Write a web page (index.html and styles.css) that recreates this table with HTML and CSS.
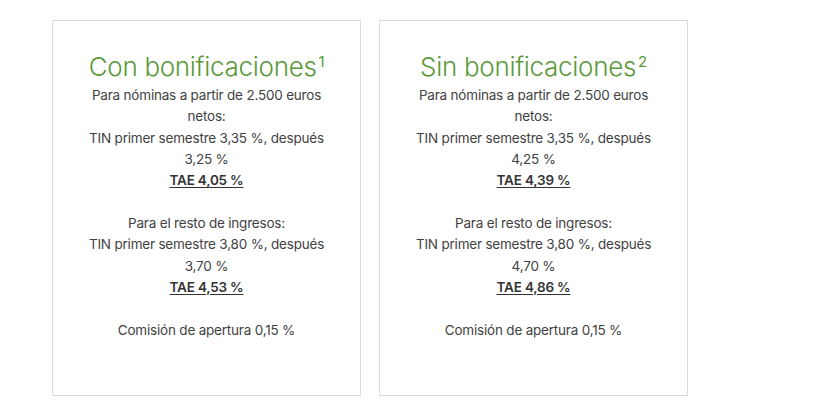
FILE: index.html
```html
<!DOCTYPE html>
<html lang="es">
<head>
<meta charset="utf-8">
<link rel="stylesheet" href="styles.css">
</head>
<body>
<div class="cards">
  <div class="card">
    <h2 class="title">Con bonificaciones<sup>1</sup></h2>
    <p class="txt">Para nóminas a partir de 2.500 euros netos:<br>TIN primer semestre 3,35 %, después 3,25 %<br><a class="tae">TAE 4,05 %</a></p>
    <p class="txt">Para el resto de ingresos:<br>TIN primer semestre 3,80 %, después 3,70 %<br><a class="tae">TAE 4,53 %</a></p>
    <p class="txt">Comisión de apertura 0,15 %</p>
  </div>
  <div class="card">
    <h2 class="title">Sin bonificaciones<sup>2</sup></h2>
    <p class="txt">Para nóminas a partir de 2.500 euros netos:<br>TIN primer semestre 3,35 %, después 4,25 %<br><a class="tae">TAE 4,39 %</a></p>
    <p class="txt">Para el resto de ingresos:<br>TIN primer semestre 3,80 %, después 4,70 %<br><a class="tae">TAE 4,86 %</a></p>
    <p class="txt">Comisión de apertura 0,15 %</p>
  </div>
</div>
</body>
</html>
```
FILE: styles.css
```css
html, body { margin: 0; padding: 0; background: #fff; }
body { font-family: Inter, "Noto Sans", sans-serif; color: #424242; }
.cards { display: flex; gap: 18px; padding: 20px 0 0 52px; }
.card {
  width: 309px; height: 376px; box-sizing: border-box;
  border: 1px solid #dcdcdc;
  padding: 30px 34px 0;
  text-align: center;
}
.title {
  margin: 0 -20px 2px; font-weight: 300; font-size: 26px; line-height: 32px;
  color: #5a993a; letter-spacing: -0.3px; white-space: nowrap;
}
.title sup { font-size: 15px; font-weight: 400; vertical-align: 0; position: relative; top: -9px; line-height: 0; margin-left: 2px; }
.txt { margin: 0 0 21.5px; font-size: 13.5px; line-height: 21.3px; letter-spacing: -0.2px; }
.tae { font-weight: 600; color: #333; text-decoration: underline; text-underline-offset: 2px; }
```
